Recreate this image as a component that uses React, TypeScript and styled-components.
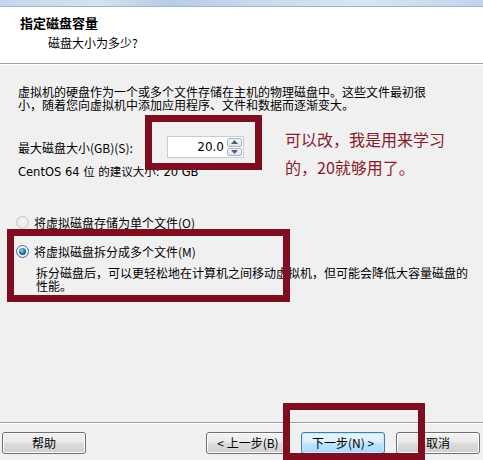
import React from "react";
import styled, { createGlobalStyle } from "styled-components";

const Global = createGlobalStyle`
  html, body { margin: 0; padding: 0; background: #f0f0f0; }
  body {
    font-family: "Noto Sans CJK SC", "DejaVu Sans", sans-serif;
    font-size: 12px;
    color: #000;
  }
`;

const Page = styled.div`
  position: relative;
  width: 483px;
  height: 460px;
  overflow: hidden;
  display: flex;
  flex-direction: column;
  background: #f0f0f0;
`;

const TitleStrip = styled.div`
  height: 7px;
  flex: none;
  background: linear-gradient(90deg, #c3d7ec 0%, #d4e2f1 20%, #b6cde6 35%, #c9dbee 55%, #d9e6f3 75%, #bfd4eb 100%);
  border-bottom: 1px solid #9fb4cc;
  box-sizing: border-box;
`;

const Header = styled.div`
  flex: none;
  height: 57px;
  box-sizing: border-box;
  background: #fff;
  border-bottom: 1px solid #a0a0a0;
  padding: 8px 0 0 20px;
`;

const Title = styled.div`
  font-size: 13px;
  font-weight: bold;
  line-height: 16px;
`;

const Subtitle = styled.div`
  margin-top: 4px;
  padding-left: 28px;
  font-size: 12px;
  line-height: 15px;
`;

const Body = styled.div`
  flex: 1;
  padding: 20px 0 0 18px;
  border-top: 1px solid #fff;
`;

const Para = styled.div`
  line-height: 13px;
`;

const SizeRow = styled.div`
  margin-top: 25px;
  display: flex;
  align-items: center;
  height: 22px;
`;

const Label = styled.div`
  width: 149px;
  line-height: 13px;
`;

const Spinner = styled.div`
  display: flex;
  align-items: stretch;
  height: 22px;
  width: 77px;
  box-sizing: border-box;
  border: 1px solid #c9ccd3;
  background: #fff;
`;

const SpinInput = styled.div`
  flex: 1;
  text-align: right;
  padding-right: 3px;
  line-height: 20px;
  font-family: "DejaVu Sans", sans-serif;
  font-size: 12px;
`;

const SpinButtons = styled.div`
  width: 15px;
  display: flex;
  flex-direction: column;
  gap: 1px;
  padding: 1px 1px 1px 0;
`;

const SpinBtn = styled.div`
  flex: 1;
  border: 1px solid #a9b3c3;
  border-radius: 2px;
  background: linear-gradient(#f4f6f9, #dfe4ec);
  display: flex;
  align-items: center;
  justify-content: center;
`;

const Hint = styled.div`
  margin-top: 8px;
  line-height: 13px;
  font-family: "DejaVu Sans", "Noto Sans CJK SC", sans-serif;
  font-size: 11.5px;
`;

const RadioRow = styled.div<{ $gap: number }>`
  margin-top: ${(p) => p.$gap}px;
  margin-left: -2px;
  display: flex;
  align-items: center;
  gap: 5px;
  height: 16px;
  color: ${(p) => "#000"};
`;

const RadioDot = styled.div<{ $checked?: boolean; $disabled?: boolean }>`
  width: 13px;
  height: 13px;
  box-sizing: border-box;
  border-radius: 50%;
  border: 1px solid ${(p) => (p.$disabled ? "#c4c4c4" : "#3d6f9c")};
  background: ${(p) =>
    p.$disabled
      ? "radial-gradient(circle at 50% 40%, #f6f6f6, #e2e2e2)"
      : "radial-gradient(circle at 50% 40%, #ffffff, #dfe8f1)"};
  display: flex;
  align-items: center;
  justify-content: center;
  &::after {
    content: "";
    display: ${(p) => (p.$checked ? "block" : "none")};
    width: 7px;
    height: 7px;
    border-radius: 50%;
    background: radial-gradient(circle at 40% 35%, #8ad0f4, #1f6a9e 55%, #0f3f66);
  }
`;

const Desc = styled.div`
  margin-top: 7px;
  padding-left: 18px;
  line-height: 13px;
`;

const Footer = styled.div`
  flex: none;
  border-top: 1px solid #a0a0a0;
  box-shadow: inset 0 1px 0 #fff;
  padding: 9px 3px 6px 2px;
  display: flex;
  justify-content: space-between;
`;

const ButtonGroup = styled.div`
  display: flex;
  gap: 11px;
`;

const Button = styled.div<{ $default?: boolean }>`
  width: 84px;
  height: 22px;
  box-sizing: border-box;
  border: 1px solid ${(p) => (p.$default ? "#3c7fb1" : "#707070")};
  border-radius: 3px;
  background: ${(p) =>
    p.$default
      ? "linear-gradient(#eaf6fd 0%, #d9f0fc 45%, #bee6fd 50%, #a7d9f5 100%)"
      : "linear-gradient(#f2f2f2 0%, #ebebeb 45%, #dddddd 50%, #cfcfcf 100%)"};
  box-shadow: inset 0 0 0 1px ${(p) => (p.$default ? "#c6e7f8" : "#fcfcfc")};
  display: flex;
  align-items: center;
  justify-content: center;
  line-height: 20px;
  font-size: 12px;
`;

const RedBox = styled.div<{ $l: number; $t: number; $w: number; $h: number }>`
  position: absolute;
  left: ${(p) => p.$l}px;
  top: ${(p) => p.$t}px;
  width: ${(p) => p.$w}px;
  height: ${(p) => p.$h}px;
  box-sizing: border-box;
  border: 7px solid #800c20;
  pointer-events: none;
`;

const Note = styled.div`
  position: absolute;
  left: 285px;
  top: 125px;
  font-size: 16px;
  line-height: 28px;
  color: #8a1a2c;
  font-family: "Noto Sans CJK SC", sans-serif;
`;

const Arrow = ({ up }: { up?: boolean }) => (
  <svg width="7" height="4" viewBox="0 0 7 4">
    <path d={up ? "M0 4 L3.5 0 L7 4 Z" : "M0 0 L3.5 4 L7 0 Z"} fill="#4d5f7c" />
  </svg>
);

export default function App() {
  return (
    <>
      <Global />
      <Page>
        <TitleStrip />
        <Header>
          <Title>指定磁盘容量</Title>
          <Subtitle>磁盘大小为多少?</Subtitle>
        </Header>
        <Body>
          <Para>
            虚拟机的硬盘作为一个或多个文件存储在主机的物理磁盘中。这些文件最初很
            <br />
            小，随着您向虚拟机中添加应用程序、文件和数据而逐渐变大。
          </Para>
          <SizeRow>
            <Label>最大磁盘大小(GB)(S):</Label>
            <Spinner>
              <SpinInput>20.0</SpinInput>
              <SpinButtons>
                <SpinBtn>
                  <Arrow up />
                </SpinBtn>
                <SpinBtn>
                  <Arrow />
                </SpinBtn>
              </SpinButtons>
            </Spinner>
          </SizeRow>
          <Hint>CentOS 64 位 的建议大小: 20 GB</Hint>
          <RadioRow $gap={35}>
            <RadioDot $disabled />
            <span>将虚拟磁盘存储为单个文件(O)</span>
          </RadioRow>
          <RadioRow $gap={13}>
            <RadioDot $checked />
            <span>将虚拟磁盘拆分成多个文件(M)</span>
          </RadioRow>
          <Desc>
            拆分磁盘后，可以更轻松地在计算机之间移动虚拟机，但可能会降低大容量磁盘的
            <br />
            性能。
          </Desc>
        </Body>
        <Footer>
          <Button>帮助</Button>
          <ButtonGroup>
            <Button>&lt; 上一步(B)</Button>
            <Button $default>下一步(N) &gt;</Button>
            <Button>取消</Button>
          </ButtonGroup>
        </Footer>
        <RedBox $l={145} $t={115} $w={117} $h={55} />
        <RedBox $l={7} $t={229} $w={283} $h={73} />
        <RedBox $l={283} $t={403} $w={142} $h={57} />
        <Note>
          可以改，我是用来学习
          <br />
          的，20就够用了。
        </Note>
      </Page>
    </>
  );
}
